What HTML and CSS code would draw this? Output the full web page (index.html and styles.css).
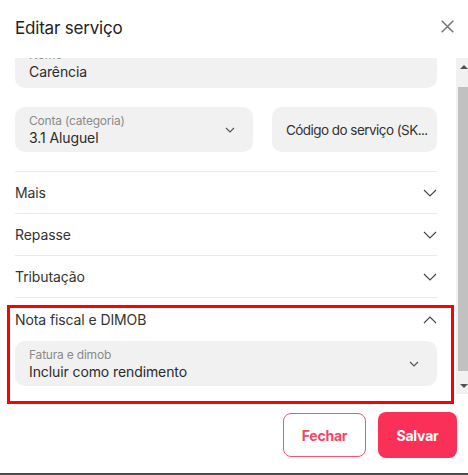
FILE: index.html
```html
<!DOCTYPE html>
<html lang="pt-BR">
<head>
<meta charset="utf-8">
<title>Editar serviço</title>
<link rel="stylesheet" href="styles.css">
</head>
<body>
<div class="modal">
  <header class="header">
    <h1 class="title">Editar serviço</h1>
    <svg class="close" width="13" height="13" viewBox="0 0 13 13"><path d="M0.7 0.7L12.3 12.3M12.3 0.7L0.7 12.3" stroke="#757575" stroke-width="1.5" fill="none"/></svg>
  </header>
  <div class="body">
    <div class="scroll">
      <div class="content">
        <div class="field full nome">
          <span class="label">Nome</span>
          <span class="value">Carência</span>
        </div>
        <div class="field-row">
          <div class="field select conta">
            <div class="field-text">
              <span class="label">Conta (categoria)</span>
              <span class="value">3.1 Aluguel</span>
            </div>
            <svg class="mini-chev" width="10" height="6" viewBox="0 0 10 6"><path d="M1 1l4 4 4-4" stroke="#555" stroke-width="1.2" fill="none"/></svg>
          </div>
          <div class="field codigo">
            <span class="placeholder">Código do serviço (SK...</span>
          </div>
        </div>
        <div class="acc">
          <div class="acc-row"><span>Mais</span><svg class="chev" width="14" height="8" viewBox="0 0 14 8"><path d="M1 1l6 6 6-6" stroke="#444" stroke-width="1.1" fill="none"/></svg></div>
          <div class="acc-row"><span>Repasse</span><svg class="chev" width="14" height="8" viewBox="0 0 14 8"><path d="M1 1l6 6 6-6" stroke="#444" stroke-width="1.1" fill="none"/></svg></div>
          <div class="acc-row"><span>Tributação</span><svg class="chev" width="14" height="8" viewBox="0 0 14 8"><path d="M1 1l6 6 6-6" stroke="#444" stroke-width="1.1" fill="none"/></svg></div>
          <div class="acc-open">
            <div class="acc-head"><span>Nota fiscal e DIMOB</span><svg class="chev" width="14" height="8" viewBox="0 0 14 8"><path d="M1 7l6-6 6 6" stroke="#444" stroke-width="1.1" fill="none"/></svg></div>
            <div class="field select full">
              <div class="field-text">
                <span class="label">Fatura e dimob</span>
                <span class="value">Incluir como rendimento</span>
              </div>
              <svg class="mini-chev" width="10" height="6" viewBox="0 0 10 6"><path d="M1 1l4 4 4-4" stroke="#555" stroke-width="1.2" fill="none"/></svg>
            </div>
          </div>
        </div>
      </div>
    </div>
    <div class="scrollbar">
      <div class="sb-btn"><span class="tri-up"></span></div>
      <div class="sb-thumb"></div>
      <div class="sb-fill"></div>
      <div class="sb-btn"><span class="tri-down"></span></div>
    </div>
  </div>
  <footer class="footer">
    <button class="btn btn-outline">Fechar</button>
    <button class="btn btn-primary">Salvar</button>
  </footer>
  <div class="highlight"></div>
</div>
</body>
</html>
```

FILE: styles.css
```css
html, body {
  margin: 0;
  padding: 0;
}
body {
  background: #4d4d4d;
  width: 468px;
  height: 475px;
  overflow: hidden;
  font-family: Inter, "Noto Sans", sans-serif;
  color: #2b2b2b;
}
.modal {
  position: relative;
  width: 471px;
  height: 473px;
  background: #fff;
  display: flex;
  flex-direction: column;
}
.header {
  height: 58px;
  box-sizing: border-box;
  padding: 16px 17px 0 15px;
  display: flex;
  justify-content: space-between;
  align-items: flex-start;
}
.title {
  margin: 0;
  font-size: 17px;
  font-weight: 400;
  line-height: 24px;
  color: #222;
  letter-spacing: -0.2px;
}
.close {
  margin-top: 4px;
}
.body {
  height: 336px;
  display: flex;
}
.scroll {
  flex: 1;
  overflow: hidden;
  padding: 0 19px 0 15px;
}
.content {
  margin-top: -15px;
}
.field {
  box-sizing: border-box;
  height: 45px;
  background: #f1f1f1;
  border-radius: 10px;
  padding: 6px 14px 0 14px;
  display: flex;
  flex-direction: column;
}
.field.nome {
  padding-top: 4px;
}
.field.select {
  flex-direction: row;
  align-items: center;
  padding-top: 0;
}
.field-text {
  flex: 1;
  display: flex;
  flex-direction: column;
  padding-top: 1px;
}
.label {
  font-size: 12px;
  line-height: 16px;
  color: #8a8a8a;
  letter-spacing: -0.2px;
}
.value {
  font-size: 14px;
  line-height: 18px;
  color: #2b2b2b;
  letter-spacing: -0.1px;
}
.field-row {
  display: flex;
  gap: 19px;
  margin-top: 19px;
}
.conta {
  width: 238px;
}
.mini-chev {
  margin-right: 4px;
}
.codigo {
  flex: 1;
  justify-content: center;
  padding: 0 10px 0 14px;
  min-width: 0;
}
.placeholder {
  font-size: 13.5px;
  color: #333;
  white-space: nowrap;
  letter-spacing: -0.55px;
}
.acc {
  margin-top: 19px;
}
.acc-row {
  height: 41px;
  border-top: 1px solid #ebebeb;
  display: flex;
  align-items: center;
  justify-content: space-between;
  font-size: 14px;
  color: #333;
  letter-spacing: -0.1px;
}
.acc-open {
  border-top: 1px solid #ebebeb;
  padding-bottom: 10px;
}
.acc-head {
  height: 43px;
  display: flex;
  align-items: center;
  justify-content: space-between;
  font-size: 14px;
  color: #333;
  letter-spacing: -0.1px;
}
.scrollbar {
  width: 15px;
  background: #f1f1f1;
  display: flex;
  flex-direction: column;
}
.sb-btn {
  height: 17px;
  display: flex;
  align-items: center;
  justify-content: center;
}
.tri-up {
  width: 0;
  height: 0;
  border-left: 4px solid transparent;
  border-right: 4px solid transparent;
  border-bottom: 4px solid #505050;
}
.tri-down {
  width: 0;
  height: 0;
  border-left: 4px solid transparent;
  border-right: 4px solid transparent;
  border-top: 4px solid #505050;
}
.sb-thumb {
  margin: 12px 2px 0 2px;
  height: 284px;
  background: #c1c1c1;
}
.sb-fill {
  flex: 1;
}
.footer {
  flex: 1;
  display: flex;
  justify-content: flex-end;
  align-items: flex-start;
  gap: 12px;
  padding: 18px 14px 0 0;
}
.btn {
  font-family: Inter, "Noto Sans", sans-serif;
  font-size: 14px;
  font-weight: 700;
  border-radius: 8px;
  cursor: pointer;
  letter-spacing: -0.2px;
}
.btn-outline {
  width: 83px;
  height: 44px;
  margin-top: 1px;
  background: #fff;
  border: 1px solid #f0566f;
  color: #ef4767;
}
.btn-primary {
  width: 79px;
  height: 46px;
  background: #fb3058;
  border: none;
  color: #fff;
}
.highlight {
  position: absolute;
  left: 7px;
  top: 305px;
  width: 447px;
  height: 99px;
  box-sizing: border-box;
  border: 3px solid #ff0000;
  pointer-events: none;
}
```
